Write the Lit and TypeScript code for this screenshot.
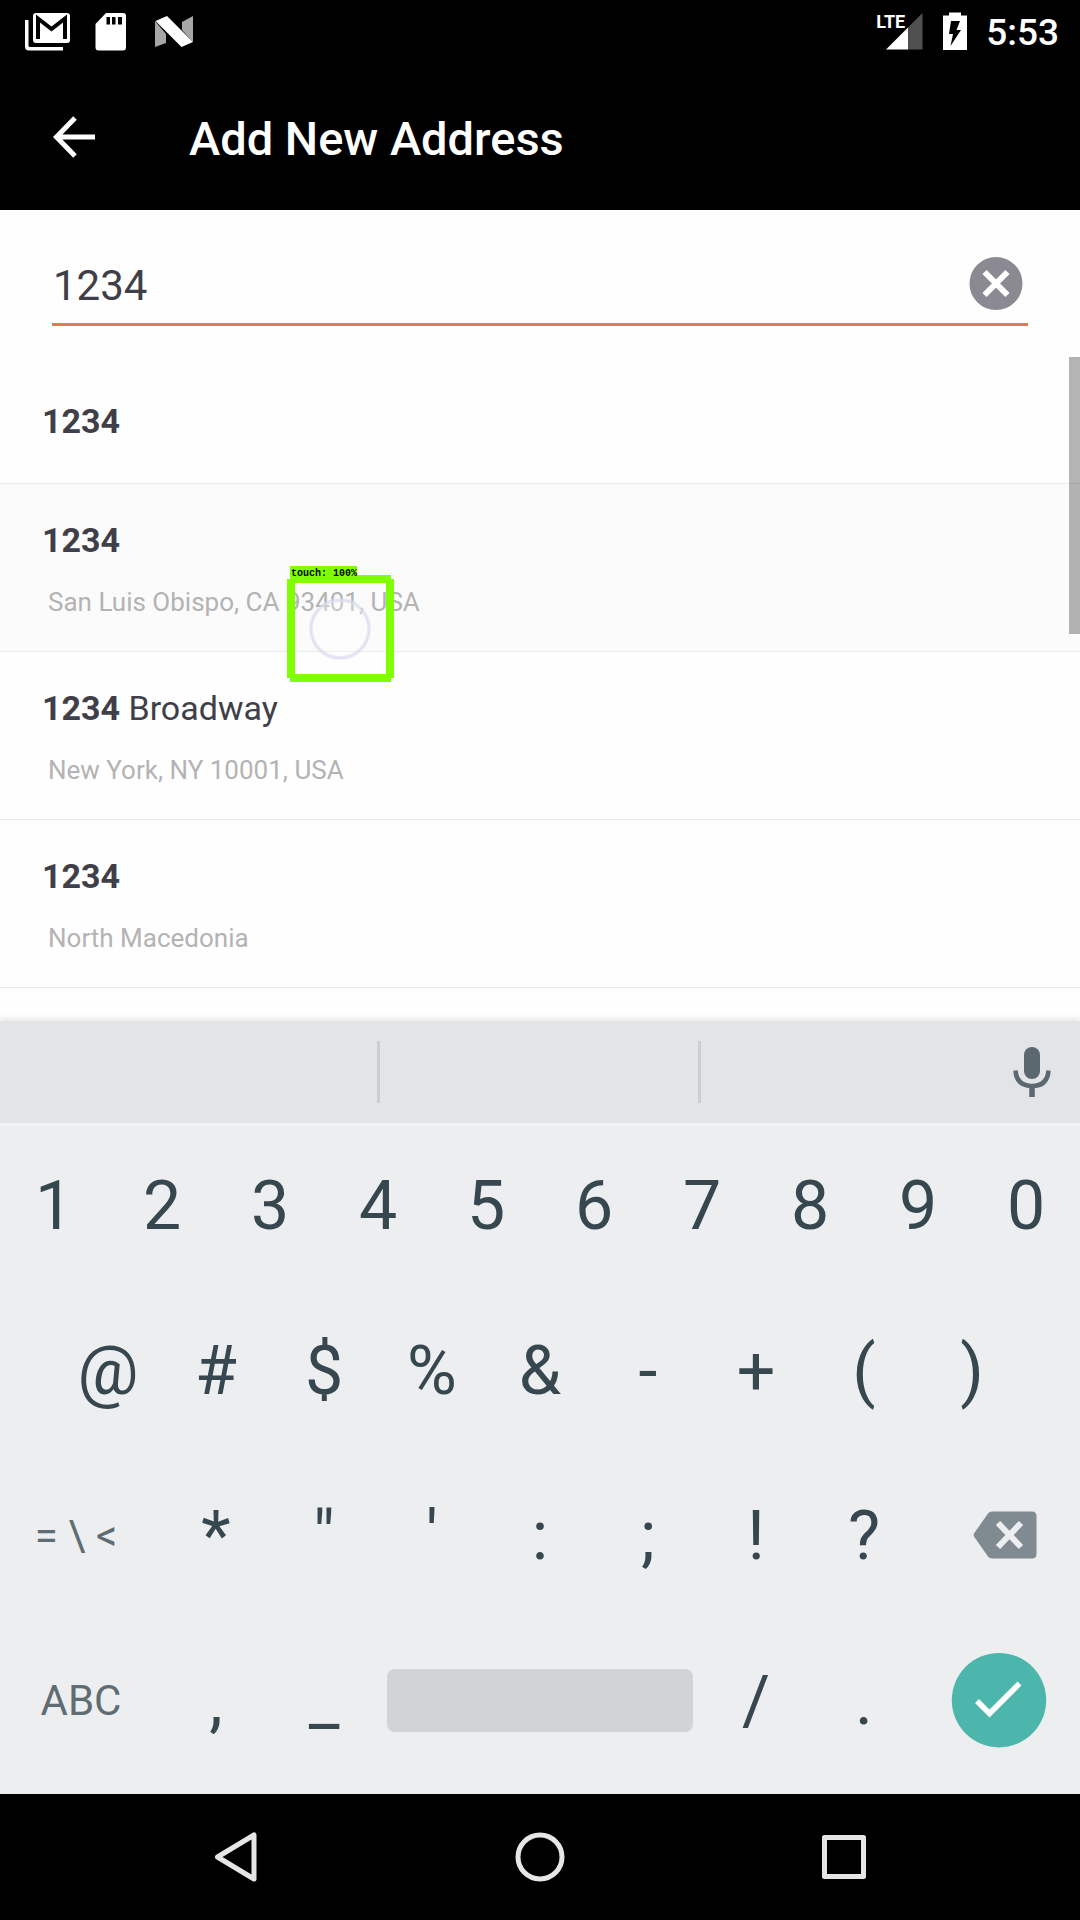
import { LitElement, html, css, svg, nothing } from "lit";
import { customElement, property, state } from "lit/decorators.js";
import { classMap } from "lit/directives/class-map.js";

interface Place {
  match: string;
  rest?: string;
  area?: string;
  pressed?: boolean;
}

@customElement("status-bar")
class StatusBar extends LitElement {
  static styles = css`
    :host {
      display: flex;
      justify-content: space-between;
      align-items: center;
      height: 64px;
      padding: 0 21px 0 24px;
      box-sizing: border-box;
      color: #fff;
    }
    .group {
      display: flex;
      align-items: center;
    }
    .notices {
      gap: 23px;
    }
    .system {
      gap: 18px;
    }
    svg {
      display: block;
    }
    .cell {
      position: relative;
    }
    .lte {
      position: absolute;
      top: 0;
      left: 0;
      font: 700 18px/20px "Liberation Sans Narrow", Roboto, sans-serif;
    }
    .clock {
      padding-top: 2px;
      font-size: 37px;
      line-height: 40px;
      font-weight: 500;
    }
  `;
  render() {
    return html`
      <div class="group notices">
        <svg width="48" height="40" viewBox="0 0 48 40" role="img" aria-label="Mail">
          <path d="M1 8H4.500V33.500Q4.500 35 6 35H39V38.500H5Q1 38.500 1 34.500Z" fill="#fff" />
          <rect x="9" y="1" width="37" height="30" rx="3" fill="#fff" />
          <path d="M14 27V6.500L27.500 17L41 6.500V27" fill="none" stroke="#000" stroke-width="4" />
        </svg>
        <svg width="32" height="40" viewBox="0 0 32 40" role="img" aria-label="Storage card">
          <path d="M11 1H28Q31 1 31 4V35.500Q31 38.500 28 38.500H3.500Q.5 38.500 .5 35.500V12Z" fill="#fff" />
          <path d="M11.500 5H15V12.500H11.500ZM17 5H20.500V12.500H17ZM23 5H27V12.500H23Z" fill="#000" />
        </svg>
        <svg width="44" height="40" viewBox="-4 0 44 40" role="img" aria-label="System">
          <path d="M1 9L12 22V31L1 35Z" fill="#a6a6a6" />
          <path d="M28 10L39 4V30L28 18Z" fill="#a6a6a6" />
          <path d="M1.500 9L13 4L39 30L27.500 35Z" fill="#fff" />
        </svg>
      </div>
      <div class="group system">
        <div class="cell">
          <svg width="48" height="40" viewBox="0 0 48 40" role="img" aria-label="Signal">
            <path d="M10 37.500L32 15.500V37.500Z" fill="#fff" />
            <path d="M32 15.500L46.500 1V37.500H32Z" fill="#505050" />
          </svg>
          <span class="lte">LTE</span>
        </div>
        <svg width="26" height="40" viewBox="0 0 26 40" role="img" aria-label="Charging">
          <path d="M1 3.500H7V.5H19V3.500H25V38H1Z" fill="#fff" />
          <path d="M9 9H18L14.500 18H19L8.500 34L11 22H7Z" fill="#000" />
        </svg>
        <time class="clock">5:53</time>
      </div>
    `;
  }
}

@customElement("place-list")
class PlaceList extends LitElement {
  @property({ attribute: false }) places: Place[] = [];
  static styles = css`
    :host {
      display: block;
      position: relative;
    }
    .list {
      list-style: none;
      margin: 0;
      padding: 0;
    }
    .item {
      border-bottom: 1px solid #e9eaea;
    }
    .pressed {
      background: #fbfbfb;
    }
    .place {
      display: flex;
      flex-direction: column;
      gap: 26px;
      width: 100%;
      border: 0;
      margin: 0;
      padding: 36px 42px 33px;
      background: none;
      font: inherit;
      text-align: left;
      color: #3e3f49;
    }
    .single {
      padding: 44px 42px 42px;
    }
    .name {
      font-size: 34px;
      line-height: 40px;
    }
    .area {
      font-size: 26px;
      line-height: 32px;
      padding-left: 6px;
      color: #b3b3b4;
    }
    .thumb {
      position: absolute;
      top: 0;
      right: 0;
      width: 11px;
      height: 277px;
      background: rgba(0, 0, 0, 0.29);
    }
    .touch {
      position: absolute;
      top: 209px;
      left: 287px;
      width: 108px;
      height: 118px;
      pointer-events: none;
    }
  `;
  render() {
    return html`
      <ul class="list">
        ${this.places.map(
          (p) => html`
            <li class=${classMap({ item: true, pressed: !!p.pressed })}>
              <button type="button" class=${classMap({ place: true, single: !p.area })}>
                <span class="name"><b>${p.match}</b>${p.rest ? ` ${p.rest}` : nothing}</span>
                ${p.area ? html`<span class="area">${p.area}</span>` : nothing}
              </button>
            </li>
          `
        )}
      </ul>
      <div class="thumb"></div>
      <svg class="touch" viewBox="0 0 108 118">
        <circle cx="53" cy="63" r="29" fill="#fff" fill-opacity=".3" stroke="#dfe0f0" stroke-opacity=".5" stroke-width="4" />
        <circle cx="53" cy="63" r="29" fill="none" stroke="#d9d9ec" stroke-opacity=".6" stroke-width="2" />
        <path d="M3 9H104V13H107V112H104V116H3V112H0V13H3ZM8 17V108H99V17Z" fill="#80ff00" fill-rule="evenodd" />
        <rect x="3" y="0" width="67" height="12" fill="#80ff00" />
        <text x="4" y="10" font-family="Liberation Mono, monospace" font-size="10" font-weight="700" fill="#000">touch: 100%</text>
      </svg>
    `;
  }
}

@customElement("soft-keyboard")
class SoftKeyboard extends LitElement {
  static styles = css`
    :host {
      display: block;
      position: relative;
      background: #eceef0;
      box-shadow: 0 -3px 5px rgba(0, 0, 0, 0.08);
    }
    .strip {
      display: grid;
      grid-template-columns: 380fr 321fr 379fr;
      align-items: center;
      height: 102px;
      background: #e3e4e6;
    }
    .slot {
      height: 62px;
      border-right: 3px solid #cbced1;
    }
    .voice {
      justify-self: end;
      margin-right: 25px;
    }
    .keys {
      padding-bottom: 11px;
      box-shadow: inset 0 3px #f2f3f5;
    }
    .row {
      display: grid;
      height: 165px;
    }
    .ten {
      grid-template-columns: repeat(10, 1fr);
    }
    .nine {
      grid-template-columns: repeat(9, 1fr);
      padding: 0 5%;
    }
    .edge {
      grid-template-columns: 3fr repeat(7, 2fr) 3fr;
    }
    .bottom {
      grid-template-columns: 3fr 2fr 2fr 6fr 2fr 2fr 3fr;
    }
    button {
      display: flex;
      align-items: center;
      justify-content: center;
      min-width: 0;
      margin: 0;
      padding: 0;
      border: 0;
      background: none;
      font: 400 68px/80px Roboto, sans-serif;
      color: #37474f;
    }
    .mode {
      font-size: 42px;
      color: #5f6c72;
    }
    .symbols {
      padding-right: 10px;
    }
    .erase {
      padding-left: 12px;
    }
    .space {
      align-self: center;
      height: 63px;
      margin: 0 9px;
      border-radius: 8px;
      background: #d0d4d7;
    }
    svg {
      display: block;
    }
  `;
  private key(label: string) {
    return html`<button type="button">${label}</button>`;
  }
  render() {
    return html`
      <div class="strip">
        <div class="slot"></div>
        <div class="slot"></div>
        <button type="button" class="voice" aria-label="Voice input">
          <svg width="46" height="54" viewBox="0 0 46 54">
            <rect x="15" y="2" width="16" height="32" rx="8" fill="#5b6870" />
            <path d="M6.500 25.500Q7.500 41 23 41Q38.500 41 39.500 25.500" fill="none" stroke="#5b6870" stroke-width="4.500" />
            <path d="M23 41V52" stroke="#5b6870" stroke-width="5.500" />
          </svg>
        </button>
      </div>
      <div class="keys">
        <div class="row ten">${[..."1234567890"].map(this.key)}</div>
        <div class="row nine">${[..."@#$%&-+()"].map(this.key)}</div>
        <div class="row edge">
          <button type="button" class="mode symbols">= \\ &lt;</button>
          ${[..."*\"':;!?"].map(this.key)}
          <button type="button" class="erase" aria-label="Delete">
            <svg width="64" height="50" viewBox="0 0 64 50">
              <path d="M19 .5H59Q63.500 .5 63.500 5V43Q63.500 47.500 59 47.500H19Q16.500 47.500 15 45.500L1 25.500Q.3 24 1 22.500L15 2.500Q16.500 .5 19 .5Z" fill="#7f8b90" />
              <path d="M25 12L48 36M48 12L25 36" stroke="#eceef0" stroke-width="6" />
            </svg>
          </button>
        </div>
        <div class="row bottom">
          <button type="button" class="mode">ABC</button>
          ${[...",_"].map(this.key)}
          <button type="button" class="space" aria-label="Space"></button>
          ${[..."/."].map(this.key)}
          <button type="button" aria-label="Done">
            <svg width="96" height="96" viewBox="0 0 96 96">
              <circle cx="48" cy="47.200" r="47.200" fill="#4db6ac" />
              <path d="M26 48L38.500 60.500L68.500 30.500" fill="none" stroke="#fff" stroke-width="5.500" />
            </svg>
          </button>
        </div>
      </div>
    `;
  }
}

@customElement("nav-bar")
class NavBar extends LitElement {
  static styles = css`
    :host {
      display: grid;
      grid-template-columns: repeat(3, 304px);
      justify-content: center;
      height: 126px;
      background: #000;
    }
    button {
      display: flex;
      align-items: center;
      justify-content: center;
      padding: 0;
      border: 0;
      background: none;
    }
  `;
  private item(label: string, shape: unknown) {
    return html`<button type="button" aria-label=${label}>
      <svg width="52" height="52" viewBox="0 0 52 52" fill="none" stroke="#e6e6e6" stroke-width="5" stroke-linejoin="round">
        ${shape}
      </svg>
    </button>`;
  }
  render() {
    return html`
      ${this.item("Back", svg`<path d="M44 4V48L7.500 26Z" />`)}
      ${this.item("Home", svg`<circle cx="26" cy="26" r="22" />`)}
      ${this.item("Recent apps", svg`<rect x="6.500" y="6.500" width="39" height="39" />`)}
    `;
  }
}

@customElement("app-root")
class AppRoot extends LitElement {
  @state() private query = "1234";
  private places: Place[] = [
    { match: "1234" },
    { match: "1234", area: "San Luis Obispo, CA 93401, USA", pressed: true },
    { match: "1234", rest: "Broadway", area: "New York, NY 10001, USA" },
    { match: "1234", area: "North Macedonia" },
  ];
  static styles = css`
    :host {
      display: flex;
      flex-direction: column;
      min-height: 100vh;
      background: #fefefe;
      font-family: Roboto, sans-serif;
    }
    .top {
      background: #000;
      color: #fff;
    }
    .bar {
      display: flex;
      align-items: center;
      gap: 89px;
      height: 146px;
      padding: 0 48px;
      box-sizing: border-box;
    }
    .icon {
      display: block;
      padding: 0;
      border: 0;
      background: none;
    }
    .icon svg {
      display: block;
    }
    .title {
      margin: 0;
      padding-top: 4px;
      font-size: 47px;
      line-height: 56px;
      font-weight: 500;
    }
    .content {
      flex: 1;
    }
    .field {
      display: flex;
      align-items: center;
      height: 82px;
      margin: 34px 52px 31px;
      padding-right: 5px;
      box-sizing: border-box;
      border-bottom: 3px solid #e27b55;
    }
    .query {
      flex: 1;
      min-width: 0;
      padding: 4px 0 0 1px;
      border: 0;
      outline: 0;
      background: none;
      font: 400 42px/50px Roboto, sans-serif;
      color: #3e3f49;
    }
  `;
  render() {
    return html`
      <header class="top">
        <status-bar></status-bar>
        <div class="bar">
          <button type="button" class="icon" aria-label="Back">
            <svg width="52" height="48" viewBox="0 0 52 48">
              <path d="M27 5L8.500 24L27 43M9 24H47" fill="none" stroke="#fff" stroke-width="5" />
            </svg>
          </button>
          <h1 class="title">Add New Address</h1>
        </div>
      </header>
      <main class="content">
        <div class="field">
          <input
            class="query"
            type="text"
            aria-label="Address"
            .value=${this.query}
            @input=${(e: Event) => (this.query = (e.target as HTMLInputElement).value)}
          />
          <button type="button" class="icon" aria-label="Clear" @click=${() => (this.query = "")}>
            <svg width="54" height="54" viewBox="0 0 54 54">
              <circle cx="27" cy="26.500" r="26.500" fill="#8b8a92" />
              <path d="M15.500 15L38.500 38M38.500 15L15.500 38" stroke="#fff" stroke-width="6" />
            </svg>
          </button>
        </div>
        <place-list .places=${this.places}></place-list>
      </main>
      <soft-keyboard></soft-keyboard>
      <nav-bar></nav-bar>
    `;
  }
}
